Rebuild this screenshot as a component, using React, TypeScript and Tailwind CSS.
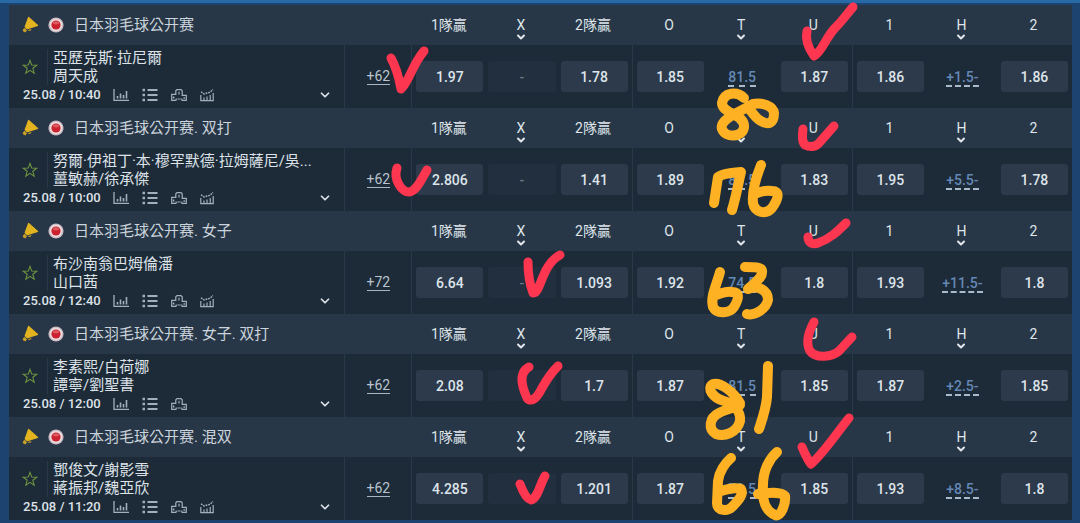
import { ChevronDown } from "lucide-react"
import clsx from "clsx"

type Match = {
  league: string
  teams: [string, string]
  time: string
  more: string
  win: [string, string]
  total: [string, string, string]
  handicap: [string, string, string]
  hasTrend: boolean
}

const matches: Match[] = [
  {
    league: "日本羽毛球公开赛",
    teams: ["亞歷克斯·拉尼爾", "周天成"],
    time: "25.08 / 10:40",
    more: "+62",
    win: ["1.97", "1.78"],
    total: ["1.85", "81.5", "1.87"],
    handicap: ["1.86", "+1.5-", "1.86"],
    hasTrend: true,
  },
  {
    league: "日本羽毛球公开赛. 双打",
    teams: ["努爾·伊祖丁·本·穆罕默德·拉姆薩尼/吳...", "薑敏赫/徐承傑"],
    time: "25.08 / 10:00",
    more: "+62",
    win: ["2.806", "1.41"],
    total: ["1.89", "80.5", "1.83"],
    handicap: ["1.95", "+5.5-", "1.78"],
    hasTrend: true,
  },
  {
    league: "日本羽毛球公开赛. 女子",
    teams: ["布沙南翁巴姆倫潘", "山口茜"],
    time: "25.08 / 12:40",
    more: "+72",
    win: ["6.64", "1.093"],
    total: ["1.92", "74.5", "1.8"],
    handicap: ["1.93", "+11.5-", "1.8"],
    hasTrend: true,
  },
  {
    league: "日本羽毛球公开赛. 女子. 双打",
    teams: ["李素熙/白荷娜", "譚寧/劉聖書"],
    time: "25.08 / 12:00",
    more: "+62",
    win: ["2.08", "1.7"],
    total: ["1.87", "81.5", "1.85"],
    handicap: ["1.87", "+2.5-", "1.85"],
    hasTrend: false,
  },
  {
    league: "日本羽毛球公开赛. 混双",
    teams: ["鄧俊文/謝影雪", "蔣振邦/魏亞欣"],
    time: "25.08 / 11:20",
    more: "+62",
    win: ["4.285", "1.201"],
    total: ["1.87", "79.5", "1.85"],
    handicap: ["1.93", "+8.5-", "1.8"],
    hasTrend: true,
  },
]

const columns = "grid grid-cols-[minmax(0,335fr)_minmax(0,67fr)_repeat(3,minmax(0,220fr))]"

function Megaphone() {
  return (
    <svg viewBox="0 0 18 18" className="size-[18px] shrink-0" aria-hidden="true">
      <path
        d="M6.6 1.4 L15.6 9.4 L5.4 12.8 L3.2 10.8 Z"
        fill="#e3b41f"
        stroke="#e3b41f"
        strokeWidth="1.2"
        strokeLinejoin="round"
      />
      <path d="M2.6 11.8 L5 14.2 L3.4 16.4 L1 15.2 L0.8 13.8 Z" fill="#c9a02a" />
      <path d="M6 14 L9.6 13 L8.8 14.6 L6.6 15 Z" fill="#c9a02a" />
    </svg>
  )
}

function JapanFlag() {
  return (
    <svg viewBox="0 0 16 16" className="size-4 shrink-0" aria-hidden="true">
      <circle cx="8" cy="8" r="7.6" fill="#c9b8c0" />
      <circle cx="8" cy="8" r="6.2" fill="#eadde0" />
      <circle cx="8" cy="8" r="4.6" fill="#cc2230" />
      <ellipse cx="8" cy="5.8" rx="3" ry="1.6" fill="#dd5a60" />
    </svg>
  )
}

function Star() {
  return (
    <svg viewBox="0 0 16 16" className="size-4" fill="none" stroke="#6f9440" strokeWidth="1.1" aria-hidden="true">
      <path d="M8 1.4 L9.7 6 L14.8 6.2 L10.8 9.3 L12.2 14.2 L8 11.4 L3.8 14.2 L5.2 9.3 L1.2 6.2 L6.3 6 Z" />
    </svg>
  )
}

function BarsIcon() {
  return (
    <svg viewBox="0 0 16 14" className="h-[14px] w-4" fill="none" stroke="currentColor" strokeWidth="1.3" aria-hidden="true">
      <path d="M1 1 V12.4 H16" />
      <path d="M4.5 8 V10.6 M7.5 5.4 V10.6 M10.5 7 V10.6 M13.5 3 V10.6" strokeWidth="1.6" />
    </svg>
  )
}

function ListIcon() {
  return (
    <svg viewBox="0 0 16 14" className="h-[14px] w-4" fill="none" stroke="currentColor" strokeWidth="1.8" aria-hidden="true">
      <path d="M0.5 2 H3 M0.5 7 H3 M0.5 12 H3" strokeWidth="2.4" />
      <path d="M5.5 2 H15.5 M5.5 7 H15.5 M5.5 12 H15.5" />
    </svg>
  )
}

function PodiumIcon() {
  return (
    <svg viewBox="0 0 16 14" className="h-[14px] w-4" fill="none" stroke="currentColor" strokeWidth="1.2" aria-hidden="true">
      <path d="M5.2 12.4 H0.7 V6.4 H4.8 V2.8 L6 1.6 H10 L11.2 2.8 V7.4 H15.3 V12.4 H10.8" />
      <path d="M5.2 10.6 V12.4 M10.8 10.6 V12.4 M6.4 11 H9.6 M8 3.8 V6.6" />
      <path d="M2.6 8.6 V10.6 M13.2 9.2 V10.8" strokeWidth="1.5" />
    </svg>
  )
}

function TrendIcon() {
  return (
    <svg viewBox="0 0 14 14" className="size-[14px]" fill="none" stroke="currentColor" strokeWidth="1.2" aria-hidden="true">
      <path d="M0.8 7 V12.6 H13.2 V5" />
      <path d="M4 9.4 V12.6 M7 8.4 V12.6 M10.2 7 V12.6" />
      <path d="M1 3.8 L4 6 L7 5 L10 4.4 L13 1.4" strokeWidth="1.4" strokeDasharray="1.8 0.9" />
    </svg>
  )
}

function HeaderCell({ label, menu = false }: { label: string; menu?: boolean }) {
  if (!menu) return <div className="pt-[10px] text-center leading-5">{label}</div>
  return (
    <button className="flex flex-col items-center pt-[10px] leading-5">
      {label}
      <ChevronDown className="-mt-1 size-3" strokeWidth={4} />
    </button>
  )
}

function Odd({ value }: { value: string }) {
  const empty = value === "-"
  return (
    <button
      disabled={empty}
      className={clsx(
        "h-[31px] rounded-[3px] text-center font-medium",
        empty ? "bg-[#222f3e] text-[#66788a]" : "bg-[#2d3a4b] text-[#dde4ea]",
      )}
    >
      {value}
    </button>
  )
}

function Line({ value }: { value: string }) {
  return (
    <button className="text-center font-medium text-[#6488b5]">
      <span className="inline-block border-b-2 border-dashed border-[#a9bacb] leading-[15px]">{value}</span>
    </button>
  )
}

const groupClass = "grid grid-cols-3 items-center gap-[5px] border-l border-[#2a3949] px-1"
const headGroupClass = "grid grid-cols-3 items-start gap-[5px] border-l border-transparent pr-[5px] pl-[3px]"

function MatchBlock({ match }: { match: Match }) {
  return (
    <section>
      {/* League header */}
      <div className={clsx(columns, "h-10 bg-[#283747] text-sm text-[#dfe5ea]")}>
        <div className="col-span-2 flex items-center pl-[13px]">
          <Megaphone />
          <span className="ml-2 flex">
            <JapanFlag />
          </span>
          <h2 className="ml-2.5 truncate pt-px text-[15px] text-[#cbd4dc]">{match.league}</h2>
        </div>
        <div className={headGroupClass}>
          <HeaderCell label="1隊贏" />
          <HeaderCell label="X" menu />
          <HeaderCell label="2隊贏" />
        </div>
        <div className={headGroupClass}>
          <HeaderCell label="O" />
          <HeaderCell label="T" menu />
          <HeaderCell label="U" />
        </div>
        <div className={headGroupClass}>
          <HeaderCell label="1" />
          <HeaderCell label="H" menu />
          <HeaderCell label="2" />
        </div>
      </div>

      {/* Match row */}
      <div className={clsx(columns, "h-[63px] bg-[#1d2a37] text-sm")}>
        <div className="flex flex-col pt-1">
          <div className="flex items-center pl-[13px]">
            <button aria-label="Favourite">
              <Star />
            </button>
            <div className="ml-[9px] min-w-0 border-l border-[#2a3949] pl-[5px] text-[15px] leading-[18px] text-[#dde3e9]">
              <p className="truncate">{match.teams[0]}</p>
              <p className="truncate">{match.teams[1]}</p>
            </div>
          </div>
          <div className="flex h-5 items-center pl-3.5 pr-3 text-[#a3b0bc]">
            <time className="w-[90px] text-[13px] font-medium text-[#dde3e9]">{match.time}</time>
            <div className="flex flex-1 items-center gap-[13px]">
              <BarsIcon />
              <ListIcon />
              <PodiumIcon />
              {match.hasTrend && <TrendIcon />}
            </div>
            <button aria-label="Expand match" className="text-[#dde3e9]">
              <ChevronDown className="size-[14px]" strokeWidth={3} />
            </button>
          </div>
        </div>
        <div className="flex items-center justify-center border-l border-[#2a3949]">
          <a href="#more" className="border-b border-[#a9b5c0] leading-4 text-[#b9c4ce]">
            {match.more}
          </a>
        </div>
        <div className={groupClass}>
          <Odd value={match.win[0]} />
          <Odd value="-" />
          <Odd value={match.win[1]} />
        </div>
        <div className={groupClass}>
          <Odd value={match.total[0]} />
          <Line value={match.total[1]} />
          <Odd value={match.total[2]} />
        </div>
        <div className={groupClass}>
          <Odd value={match.handicap[0]} />
          <Line value={match.handicap[1]} />
          <Odd value={match.handicap[2]} />
        </div>
      </div>
    </section>
  )
}

// Freehand marks drawn on top of the board
function Marks() {
  return (
    <svg
      viewBox="0 0 1080 523"
      preserveAspectRatio="none"
      className="pointer-events-none absolute inset-x-0 -top-[3px] h-[calc(100%+3px)] w-full"
      fill="none"
      strokeLinecap="round"
      strokeLinejoin="round"
      aria-hidden="true"
    >
      <g stroke="#fe364f" strokeWidth="9">
        <path d="M391 58 C396 67 399 78 401 89 C408 84 412 65 424 51" />
        <path d="M807 31 C805 40 809 49 814 56 C822 52 826 37 835 28 C843 20 847 14 853 7" />
        <path d="M397 168 C393 180 402 192 409 192 C417 191 422 178 427 170" />
        <path d="M803 129 C802 137 802 142 805 145 C811 148 817 146 819 143 L834 126" />
        <path d="M808 237 C808 243 813 245 818 243 C830 239 838 231 846 223" />
        <path d="M814 322 C808 333 806 344 810 351 C816 359 832 357 839 351 L852 337" />
        <path d="M802 447 C805 454 808 461 811 464 C823 454 836 434 849 418" />
        <path d="M528 262 C528 274 530 285 533 293 C541 294 541 265 560 255" />
        <path d="M529 367 C518 373 522 387 527 398 C532 404 538 396 542 388 C547 379 552 372 558 366" />
        <path d="M520 484 C523 492 527 499 531 500 C538 498 540 484 545 476" />
      </g>
      <g stroke="#feb122" strokeWidth="10">
        <path d="M744 98 C737 91 724 92 722 103 C722 114 745 114 744 127 C743 138 725 138 722 129 C719 119 740 112 753 104 C762 102 773 106 774 113 C774 124 768 125 761 121 C755 118 752 112 748 107" />
        <path d="M714 203 L718 177 C726 172 735 173 741 172 C738 184 737 193 732 210" />
        <path d="M761 165 C755 180 752 193 753 203 C755 213 766 215 772 208 C779 198 780 191 772 191 C766 190 762 191 757 193" />
        <path d="M720 272 C717 284 710 296 713 307 C717 315 730 313 734 307 C740 297 739 292 732 292 C727 291 721 293 716 295" />
        <path d="M745 267 C754 267 762 267 762 271 C763 278 755 282 748 289 C758 285 768 290 768 300 C766 309 755 316 747 314" />
        <path d="M740 403 C733 391 720 382 713 384 C706 388 713 398 724 401 C735 404 741 412 740 421 C737 433 724 437 716 434 C708 429 709 418 719 413 C726 409 734 408 740 405" />
        <path d="M768 366 L767 397 C766 409 762 420 759 429" />
        <path d="M731 458 C725 463 719 472 718 481 L717 503 C717 512 728 511 732 507 C739 500 744 494 741 489 C735 487 727 489 721 491" />
        <path d="M777 452 C769 459 763 471 763 485 C762 499 764 510 775 515 C781 518 786 503 785 496 C780 491 767 493 758 494" />
      </g>
    </svg>
  )
}

export default function App() {
  return (
    <main className="relative border-t-[3px] border-[#286aa5] bg-[#1d4470] pl-[9px] pr-2 pt-0.5 pb-[3px] font-[Roboto,'Noto_Sans_CJK_TC',sans-serif]">
      {matches.map((match) => (
        <MatchBlock key={match.league} match={match} />
      ))}
      <Marks />
    </main>
  )
}
